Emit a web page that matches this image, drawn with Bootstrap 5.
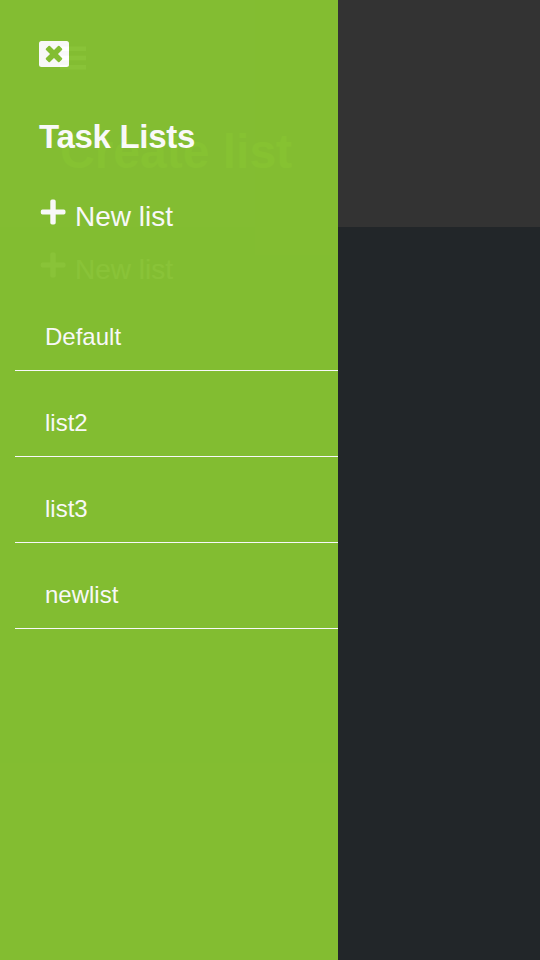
<!DOCTYPE html>
<html lang="en">
<head>
<meta charset="utf-8">
<meta name="viewport" content="width=device-width, initial-scale=1">
<title>Task Lists</title>
<link rel="stylesheet" href="https://cdn.jsdelivr.net/npm/bootstrap@5.3.0/dist/css/bootstrap.min.css">
<style>
  body { font-family: "Liberation Sans", Arial, sans-serif; background: #222629; color: #fff; }
  .page-head { height: 227px; background: #333; padding: 42px 0 0 60px; }
  .page-title { font-size: 48px; line-height: 58px; margin-top: 51px; color: #86c232; }
  .page-new { padding: 22px 0 0 39px; }
  .drawer { width: 338px; background: #86c232; color: #fff; opacity: .97; }
  .drawer-top { padding: 41px 0 0 39px; }
  .drawer-title { font-size: 33px; line-height: 40px; letter-spacing: -.3px; margin: 50px 0 0; }
  .new-link { font-size: 28px; line-height: 42px; }
  .new-link svg { margin: 0 8px 10px 0; }
  .drawer .new-link { margin-top: 39px; }
  .task-lists { margin: 47px 0 0 15px; }
  .task-list { font-size: 24px; line-height: 36px; padding: 34px 30px 15px; border-bottom: 1px solid #fff; }
</style>
<script src="https://cdn.jsdelivr.net/npm/bootstrap@5.3.0/dist/js/bootstrap.bundle.min.js"></script>
</head>
<body class="position-relative vh-100 overflow-hidden">
  <header class="page-head">
    <svg class="d-block" width="27" height="30" viewBox="0 0 27 30" fill="currentColor"><path d="M0 4.500h26v4.500H0zM0 13.700h26v4.500H0zM0 23h26v4.500H0z"/></svg>
    <h1 class="page-title fw-bold mb-0">Create list</h1>
  </header>
  <main class="page-new">
    <div class="new-link d-flex align-items-center">
      <svg width="28" height="26" viewBox="0 0 28 26" fill="currentColor"><path d="M13 .5h2q1.700 0 1.700 1.700v8.300h8.100q1.700 0 1.700 1.700v1.600q0 1.700-1.700 1.700h-8.100v8.300q0 1.700-1.700 1.700h-2q-1.700 0-1.700-1.700v-8.300H3.500q-1.700 0-1.700-1.700v-1.600q0-1.700 1.700-1.700h7.800V2.200Q11.300.5 13 .5z"/></svg>
      <span>New list</span>
    </div>
  </main>

  <nav class="drawer position-absolute top-0 start-0 h-100">
    <div class="drawer-top">
      <svg class="d-block" role="img" aria-label="Close" width="30" height="26" viewBox="0 0 30 26"><rect width="30" height="26" rx="2.500" fill="#fff"/><g fill="#86c232" transform="rotate(45 15 13)"><rect x="5.500" y="10.200" width="19" height="5.600" rx="1"/><rect x="12.200" y="3.500" width="5.600" height="19" rx="1"/></g></svg>
      <h2 class="drawer-title fw-bold">Task Lists</h2>
      <div class="new-link d-flex align-items-center">
        <svg width="28" height="26" viewBox="0 0 28 26" fill="currentColor"><path d="M13 .5h2q1.700 0 1.700 1.700v8.300h8.100q1.700 0 1.700 1.700v1.600q0 1.700-1.700 1.700h-8.100v8.300q0 1.700-1.700 1.700h-2q-1.700 0-1.700-1.700v-8.300H3.500q-1.700 0-1.700-1.700v-1.600q0-1.700 1.700-1.700h7.800V2.200Q11.300.5 13 .5z"/></svg>
        <span>New list</span>
      </div>
    </div>
    <ul class="task-lists list-unstyled mb-0">
      <li class="task-list">Default</li>
      <li class="task-list">list2</li>
      <li class="task-list">list3</li>
      <li class="task-list">newlist</li>
    </ul>
  </nav>
</body>
</html>
